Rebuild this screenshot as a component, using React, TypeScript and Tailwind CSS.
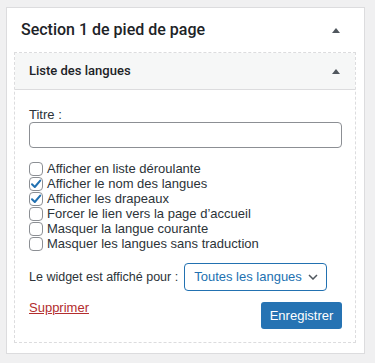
const options = [
  { label: "Afficher en liste déroulante", checked: false },
  { label: "Afficher le nom des langues", checked: true },
  { label: "Afficher les drapeaux", checked: true },
  { label: "Forcer le lien vers la page d’accueil", checked: false },
  { label: "Masquer la langue courante", checked: false },
  { label: "Masquer les langues sans traduction", checked: false },
]

function Arrow() {
  return (
    <svg width="8" height="5" viewBox="0 0 8 5" className="text-[#50575e]">
      <path d="M0 5 L4 0 L8 5 Z" fill="currentColor" />
    </svg>
  )
}

function Checkbox({ checked }: { checked: boolean }) {
  return (
    <span className="flex h-[14px] w-[14px] shrink-0 items-center justify-center rounded-[4px] border border-[#8c8f94] bg-white">
      {checked && (
        <svg width="12" height="12" viewBox="0 0 12 12">
          <path d="M2 6.2 L4.8 9 L10.2 2.6" stroke="#2271b1" strokeWidth="2" fill="none" strokeLinecap="round" strokeLinejoin="round" />
        </svg>
      )}
    </span>
  )
}

export default function App() {
  return (
    <div className="h-[363px] overflow-hidden bg-[#f0f0f1] pt-[7px] font-['Liberation_Sans',Arial,sans-serif] text-[#2c3338]">
      <div className="ml-[6px] w-[359px] border border-[#dcdcde] bg-white pb-[10px]">
        <div className="flex h-[44px] items-center justify-between pl-[14px] pr-[24px]">
          <h2 className="font-['Roboto',sans-serif] text-[16px] font-medium text-[#1d2327]">Section 1 de pied de page</h2>
          <Arrow />
        </div>

        <div className="ml-[7px] mr-[8px] border border-dashed border-[#dcdcde]">
          <div className="flex h-[37px] items-center justify-between border-b border-[#dcdcde] bg-[#f6f7f7] pl-[14px] pr-[15px]">
            <span className="font-['Roboto',sans-serif] text-[13px] font-medium text-[#1d2327]">Liste des langues</span>
            <Arrow />
          </div>

          <div className="px-[14px] pb-[13px] pt-[17px] text-[13px]">
            <label className="block leading-[15px]">Titre :</label>
            <input
              type="text"
              className="mt-0 block h-[26px] w-[313px] rounded-[4px] border border-[#8c8f94] bg-white"
            />

            <div className="mt-[13px] flex flex-col">
              {options.map((o) => (
                <label key={o.label} className="flex h-[15px] items-center gap-[4px] leading-[15px]">
                  <Checkbox checked={o.checked} />
                  <span>{o.label}</span>
                </label>
              ))}
            </div>

            <div className="mt-[12px] flex items-center gap-[6px] whitespace-nowrap">
              <span className="text-[12.5px]">Le widget est affiché pour :</span>
              <div className="flex h-[28px] w-[143px] items-center justify-between rounded-[4px] border border-[#2271b1] pl-[9px] pr-[8px] text-[13px] text-[#2271b1]">
                <span>Toutes les langues</span>
                <svg width="10" height="6" viewBox="0 0 10 6">
                  <path d="M1 1 L5 5 L9 1" stroke="#50575e" strokeWidth="1.5" fill="none" />
                </svg>
              </div>
            </div>

            <div className="mt-[11px] flex items-start justify-between">
              <a href="#" className="text-[13px] leading-[12px] text-[#b32d2e] underline">Supprimer</a>
              <button className="mr-[-1px] h-[27px] w-[81px] rounded-[3px] bg-[#2673b3] text-[13px] text-white">
                Enregistrer
              </button>
            </div>
          </div>
        </div>
      </div>
      <div className="ml-[6px] mt-[9px] h-[2px] w-[359px] border-t border-[#dcdcde] bg-white" />
    </div>
  )
}
